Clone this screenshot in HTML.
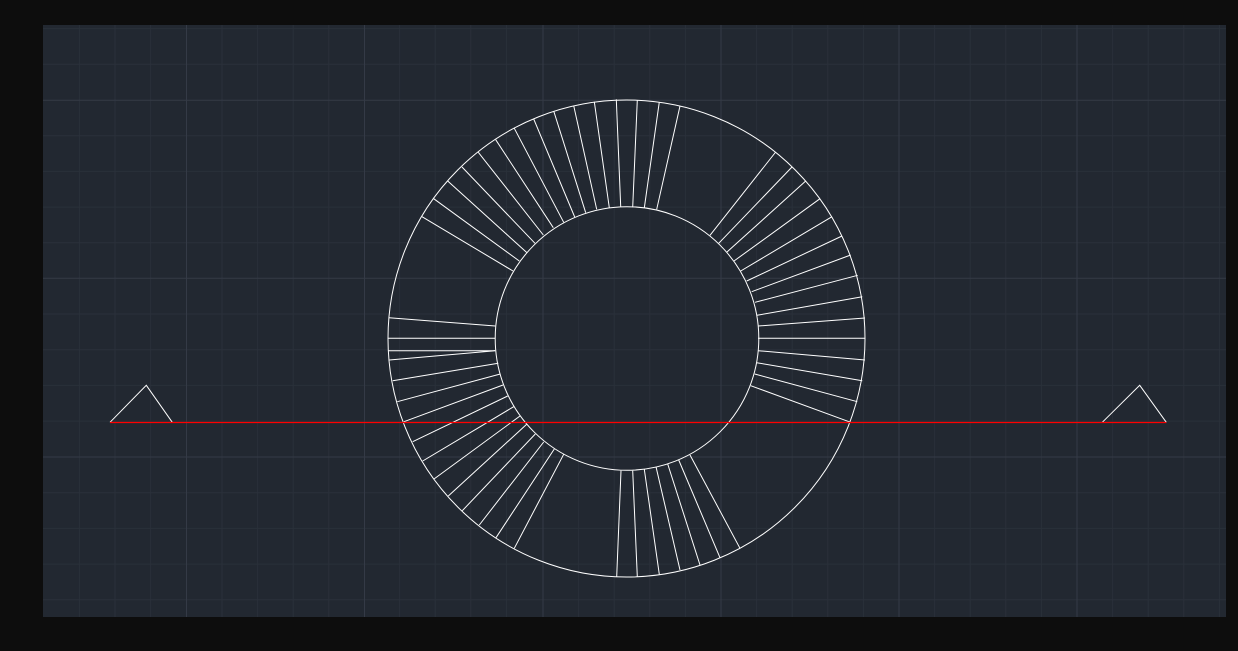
<!DOCTYPE html>
<html><head><meta charset="utf-8"><style>
html,body{margin:0;padding:0;background:#0d0d0d;width:1238px;height:651px;overflow:hidden}
svg{display:block}
</style></head><body>
<svg width="1238" height="651" viewBox="0 0 1238 651" xmlns="http://www.w3.org/2000/svg">
<rect x="0" y="0" width="1238" height="651" fill="#0d0d0d"/>
<rect x="43" y="25" width="1183" height="592" fill="#222831"/>
<g stroke="#2a303a" stroke-width="1">
<path d="M79.4 25V617M115 25V617M150.6 25V617M222 25V617M257.6 25V617M293.2 25V617M328.8 25V617M399.6 25V617M435.2 25V617M470.8 25V617M506.4 25V617M578.6 25V617M614.2 25V617M649.8 25V617M685.4 25V617M756.6 25V617M792.2 25V617M827.8 25V617M863.4 25V617M934.6 25V617M970.2 25V617M1005.8 25V617M1041.4 25V617M1112.6 25V617M1148.2 25V617M1183.8 25V617M1219.4 25V617"/>
<path d="M43 28.6H1226M43 64.3H1226M43 135.7H1226M43 171.4H1226M43 207.1H1226M43 242.8H1226M43 314H1226M43 349.7H1226M43 385.4H1226M43 421.1H1226M43 492.7H1226M43 528.4H1226M43 564.1H1226M43 599.8H1226"/>
</g>
<g stroke="#343a46" stroke-width="1">
<path d="M186.5 25V617M364.5 25V617M543 25V617M721 25V617M899 25V617M1077 25V617"/>
<path d="M43 100.3H1226M43 278.3H1226M43 457H1226"/>
</g>
<g stroke="#ffffff" stroke-width="1" fill="none">
<circle cx="626.5" cy="338.5" r="238.5"/>
<circle cx="627" cy="338.5" r="131.8"/>
<path d="M616.3 99.3L620.7 206.7M594.3 101.7L609.3 207.7M573.7 105.7L596.7 209.3M553.7 111L585.7 212.7M533.7 119L574.7 217M514.3 128.3L563.7 222.3M495.7 139.7L553.3 227.7M478.3 152.3L543.3 235M462 167L535 243.3M447.7 181L527 252.7M433.7 198.7L519.3 261M422 216.7L513 271M389 317.7L495.3 326M388 338.3L495 338.3"/>
<path d="M637.3 100L632.7 207.3M659.3 102L644.3 208M680 106L656.7 209.3M775.7 152L710 235.3M792 167L718.7 243.3M805.7 181L726.7 252.3M820 198.7L734 261M832 216.7L740.7 271M842 236L746.7 281M850.7 255L751.7 291.7M857.7 275.3L755 302.3M862.3 296.7L757 315.3M865 318L758.3 326M865 338.3L758 338.3"/>
<path d="M388 350.7L495 350.7M389.3 360L495.3 350.7M392.7 380.7L498.3 363.3M397.3 401.7L500.3 374M404 421.7L503 385M412.7 441.7L507.7 396M422.7 461L513.7 406.7M434 479L520 416M448.3 496L526.7 424.3M462.3 510.7L535.3 434M479.3 525L543.7 442M496 537.7L554.3 449M514.3 548.3L563.7 454.3"/>
<path d="M758.3 350.7L865 360M756.7 362.7L862.3 380.7M754.7 374L857.3 401.7M750.7 385.7L850.7 422.3"/>
<path d="M621 470.7L616.7 576.7M637.3 576.7L632.7 470.7M659.3 574.3L644.3 469.3M680 570L656 466.7M700 565L667.7 464M720 557.7L678.7 460M740 548.3L690 455"/>
<path d="M110 422.3L146.3 385.3L172.3 422.3M1102.3 422.3L1139.7 385.3L1166.3 422.3"/>
</g>
<path d="M110 422.5H1166.3" stroke="#ff0000" stroke-width="1.3"/>
</svg>
</body></html>
